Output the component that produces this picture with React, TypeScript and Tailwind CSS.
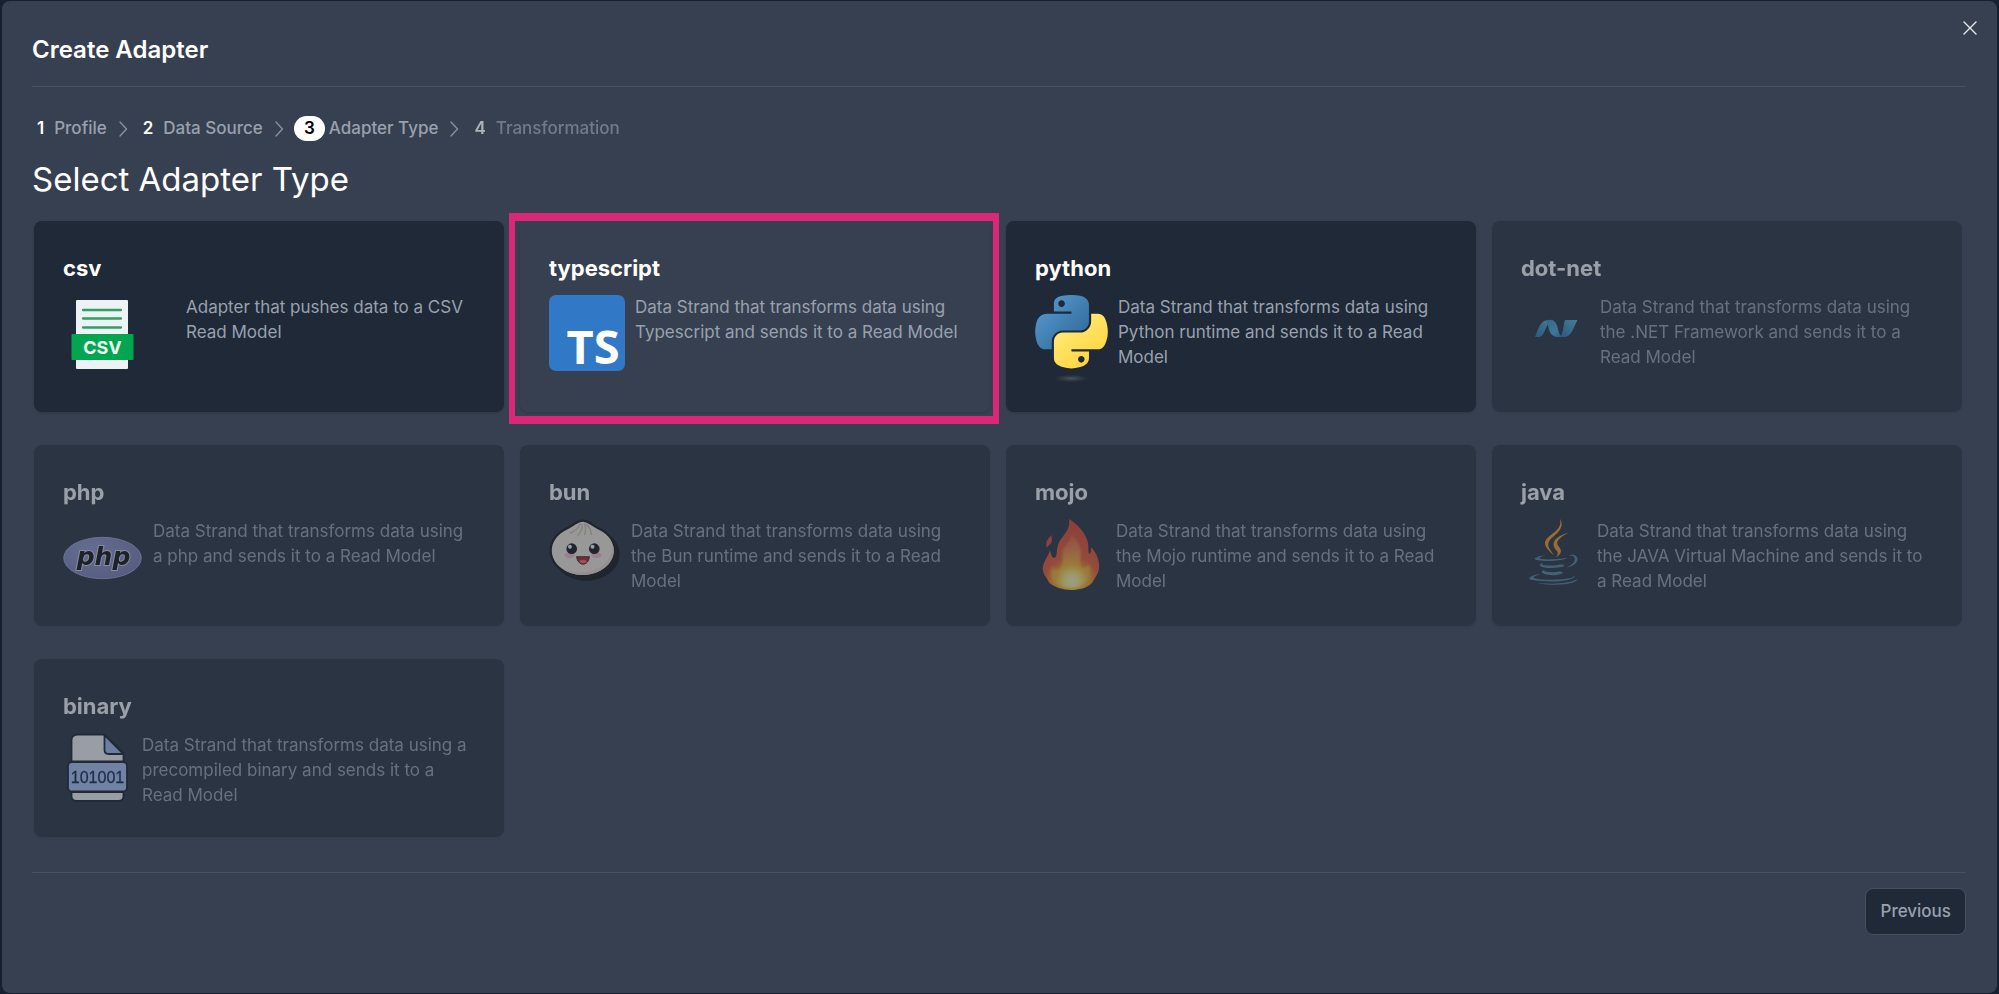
import { Fragment, type ReactNode } from "react";

function CsvIcon() {
  return (
    <svg viewBox="0 0 113 78" className="h-[78px] w-[113px] shrink-0" aria-hidden="true">
      <rect x="13" y="5" width="52" height="69" rx="1" fill="#edf2f4" />
      <path d="M20 15h38M20 23.500h38M20 32.500h38" stroke="#2fa064" strokeWidth="2.300" strokeLinecap="round" />
      <rect x="8.500" y="39" width="62" height="26" rx="1" fill="#04a550" />
      <text x="39.500" y="58.500" textAnchor="middle" fontFamily="Inter, sans-serif" fontWeight="700" fontSize="18" fill="#effff5">
        CSV
      </text>
    </svg>
  );
}

function TypescriptIcon() {
  return (
    <svg viewBox="0 0 76 76" className="h-[76px] w-[76px] shrink-0 overflow-visible" aria-hidden="true">
      <rect width="76" height="76" rx="7" fill="#3178c6" />
      <text x="44" y="69" textAnchor="middle" fontFamily="'Open Sans', sans-serif" fontWeight="700" fontSize="47" fill="#fff">
        TS
      </text>
    </svg>
  );
}

function PythonIcon() {
  return (
    <svg viewBox="12.800 2 102.400 124" className="h-[88px] w-[73px] shrink-0" aria-hidden="true">
      <defs>
        <linearGradient id="py-blue" x1="0" y1="0" x2="0.9" y2="0.9">
          <stop offset="0" stopColor="#5a9fd4" />
          <stop offset="1" stopColor="#306998" />
        </linearGradient>
        <linearGradient id="py-yellow" x1="0.8" y1="0.9" x2="0.3" y2="0.2">
          <stop offset="0" stopColor="#ffd43b" />
          <stop offset="1" stopColor="#ffe873" />
        </linearGradient>
        <radialGradient id="py-shadow">
          <stop offset="0" stopColor="#b8b8b8" stopOpacity="0.300" />
          <stop offset="1" stopColor="#7f7f7f" stopOpacity="0" />
        </radialGradient>
      </defs>
      <path
        fill="url(#py-blue)"
        d="M63.391 1.988c-4.222.02-8.252.379-11.8 1.007-10.45 1.846-12.346 5.71-12.346 12.837v9.411h24.693v3.137H29.977c-7.176 0-13.46 4.313-15.426 12.521-2.268 9.405-2.368 15.275 0 25.096 1.755 7.311 5.947 12.519 13.124 12.519h8.491V67.234c0-8.151 7.051-15.34 15.426-15.34h24.665c6.866 0 12.346-5.654 12.346-12.548V15.833c0-6.693-5.646-11.72-12.346-12.837-4.244-.706-8.645-1.027-12.866-1.008zM50.037 9.557c2.55 0 4.634 2.117 4.634 4.721 0 2.593-2.083 4.69-4.634 4.69-2.56 0-4.633-2.097-4.633-4.69-.001-2.604 2.073-4.721 4.633-4.721z"
      />
      <path
        fill="url(#py-yellow)"
        d="M91.682 28.38v10.966c0 8.5-7.208 15.655-15.426 15.655H51.591c-6.756 0-12.346 5.783-12.346 12.549v23.515c0 6.691 5.818 10.628 12.346 12.547 7.816 2.297 15.312 2.713 24.665 0 6.216-1.801 12.346-5.423 12.346-12.547v-9.412H63.938v-3.138h37.012c7.176 0 9.852-5.005 12.348-12.519 2.578-7.735 2.467-15.174 0-25.096-1.774-7.145-5.161-12.521-12.348-12.521h-9.268zM77.809 87.927c2.561 0 4.634 2.097 4.634 4.692 0 2.602-2.074 4.719-4.634 4.719-2.55 0-4.633-2.117-4.633-4.719 0-2.595 2.083-4.692 4.633-4.692z"
      />
      <ellipse cx="63.500" cy="119.500" rx="25" ry="5.500" fill="url(#py-shadow)" />
    </svg>
  );
}

function DotNetIcon() {
  return (
    <svg viewBox="0 0 69 69" className="h-[69px] w-[69px] shrink-0" aria-hidden="true">
      <defs>
        <linearGradient id="net-a" x1="0" y1="1" x2="1" y2="0">
          <stop offset="0" stopColor="#1c74b5" />
          <stop offset="1" stopColor="#59b6de" />
        </linearGradient>
        <linearGradient id="net-b" x1="0" y1="0" x2="1" y2="1">
          <stop offset="0" stopColor="#2d8fc6" />
          <stop offset="0.600" stopColor="#49b0df" />
          <stop offset="1" stopColor="#1a6fb0" />
        </linearGradient>
      </defs>
      <path d="M14 42C17 35 19 25 27 25h4C25 27 24 42 18 42Z" fill="url(#net-a)" />
      <path d="M44 25h12.500C53 31 51 41 44 42h-6c5-2 4-12 6-17Z" fill="url(#net-a)" />
      <path d="M25 25.300c8-2 10 2 11.500 7 1.300 5 2 9 5.500 9.500-8 1.500-12-1-14-7-1.200-4-1-8-3-9.500Z" fill="url(#net-b)" />
    </svg>
  );
}

function PhpIcon() {
  return (
    <svg viewBox="0 0 80 78" className="h-[78px] w-[80px] shrink-0" aria-hidden="true">
      <defs>
        <radialGradient id="php-oval" cx="0.35" cy="0.3" r="0.75">
          <stop offset="0" stopColor="#9299d2" />
          <stop offset="1" stopColor="#777bb3" />
        </radialGradient>
      </defs>
      <ellipse cx="39.500" cy="39" rx="38.800" ry="20.700" fill="url(#php-oval)" stroke="#aeb2d5" strokeWidth="0.800" />
      <text
        x="40.500"
        y="46"
        textAnchor="middle"
        fontFamily="'DejaVu Sans', sans-serif"
        fontStyle="italic"
        fontWeight="700"
        fontSize="25"
        fill="#050505"
        stroke="#d8d9e6"
        strokeWidth="2"
        paintOrder="stroke"
      >
        php
      </text>
    </svg>
  );
}

function BunIcon() {
  return (
    <svg viewBox="0 0 81 70" className="h-[62px] w-[72px] shrink-0" aria-hidden="true">
      <path
        fill="#0b0b0b"
        d="M71.09,20.74c-.16-.17-.33-.34-.5-.5s-.33-.34-.5-.5-.33-.34-.5-.5-.33-.34-.5-.5-.33-.34-.5-.5-.33-.34-.5-.5-.33-.34-.5-.5A26.46,26.46,0,0,1,75.5,35.7c0,16.57-16.82,30.05-37.5,30.05-11.58,0-21.94-4.23-28.83-10.86l.5.5.5.5.5.5.5.5.5.5.5.5.5.5C19.55,65.3,30.14,69.75,42,69.75c20.68,0,37.5-13.48,37.5-30C79.5,32.69,76.46,26,71.09,20.74Z"
      />
      <path
        fill="#0b0b0b"
        d="M38,65.75C17.32,65.75.5,52.27.5,35.7c0-10,6.18-19.33,16.53-24.92,3-1.6,5.57-3.21,7.86-4.62,1.26-.78,2.45-1.51,3.6-2.19C32,1.89,35,.5,38,.5s5.62,1.2,8.9,3.14c1,.57,2,1.19,3.07,1.87,2.49,1.54,5.3,3.28,9,5.27C69.32,16.37,75.5,25.69,75.5,35.7,75.5,52.27,58.68,65.75,38,65.75Z"
      />
      <path
        fill="#fbf0df"
        d="M73,35.7c0,15.21-15.67,27.54-35,27.54S3,50.91,3,35.7C3,26.27,9,17.94,18.22,13S33.18,3,38,3s8.94,4.13,19.78,10C67,17.94,73,26.27,73,35.7Z"
      />
      <path
        fill="#f6dece"
        d="M73,35.7a21.67,21.67,0,0,0-.8-5.78c-2.73,33.3-43.35,34.9-59.32,24.94A40,40,0,0,0,38,63.24C57.3,63.24,73,50.89,73,35.7Z"
      />
      <path
        d="M35 5.500c-2 5-6 8-11 10.500M37 6c1 5-1 9-5 13M40 5.500c2 5 1.500 8 0 12M42.500 6.500c4 4 5 7 5 11"
        fill="none"
        stroke="#ccbea7"
        strokeWidth="1.400"
        strokeLinecap="round"
      />
      <ellipse cx="23" cy="41" rx="5.800" ry="3.200" fill="#febbd0" />
      <ellipse cx="53.500" cy="41" rx="5.800" ry="3.200" fill="#febbd0" />
      <circle cx="25.500" cy="33.500" r="6" fill="#0b0b0b" />
      <circle cx="51" cy="33.500" r="6" fill="#0b0b0b" />
      <circle cx="23.500" cy="31.300" r="2.200" fill="#fff" />
      <circle cx="49" cy="31.300" r="2.200" fill="#fff" />
      <path d="M31 42.500h14.500c-.5 5-3.500 8.500-7.200 8.500S31.500 47.500 31 42.500Z" fill="#b71422" stroke="#0b0b0b" strokeWidth="0.900" />
      <ellipse cx="38.300" cy="48" rx="4" ry="2" fill="#ff6164" />
    </svg>
  );
}

function FlameIcon() {
  return (
    <svg viewBox="0 0 71 72" className="h-[72px] w-[71px] shrink-0" aria-hidden="true">
      <defs>
        <radialGradient id="flame-outer" gradientUnits="userSpaceOnUse" cx="37" cy="66" r="60">
          <stop offset="0" stopColor="#ffd23a" />
          <stop offset="0.300" stopColor="#fb9a1e" />
          <stop offset="0.480" stopColor="#ee5626" />
          <stop offset="1" stopColor="#e0402a" />
        </radialGradient>
        <radialGradient id="flame-inner" gradientUnits="userSpaceOnUse" cx="37" cy="62" r="50">
          <stop offset="0" stopColor="#fffbd0" />
          <stop offset="0.150" stopColor="#fff07a" />
          <stop offset="0.320" stopColor="#fdb926" />
          <stop offset="0.600" stopColor="#f58538" />
          <stop offset="1" stopColor="#f2704a" stopOpacity="0.300" />
        </radialGradient>
        <filter id="flame-soft" x="-10%" y="-10%" width="120%" height="120%">
          <feGaussianBlur stdDeviation="1.300" />
        </filter>
      </defs>
      <path
        fill="url(#flame-outer)"
        d="M34 0c8 5 16 13 18.500 22 1.500 5 .5 10 1.500 13 2-1 2-4 2-7 6 6 9 15 8 22-1 5-3 7-4 9l-3 5c-5 5-13 7-20.500 7-9 0-17-3-22-7l-3-5C8 55 6 48 10 42c2-5 4-6 4.500-11 2 3 1.500 7 4.500 8 4-1 2-8 4-13C26 17 36 12 34 0Z"
      />
      <path fill="#d8472f" d="M17 16c-5 4-7 8-5 13 1-3 5-4 5-8 0-2-1-3 0-5Z" />
      <path
        fill="url(#flame-inner)"
        filter="url(#flame-soft)"
        d="M37 15c5 6 9 12 9 19 0 5-2 9 0 13 2 3 6 2 8-2 3 8 2 14-3 19-4 3-10 5-15 5-8 0-14-2-18-7-3-5-3-11 0-15 1 4 4 5 7 2 5-5 1-12 3-18 2-5 8-9 9-16Z"
      />
    </svg>
  );
}

function JavaIcon() {
  return (
    <svg viewBox="2 1 126 128" className="h-[67px] w-[66px] shrink-0" aria-hidden="true">
      <path
        fill="#5382a1"
        d="M47.617 98.12s-4.767 2.774 3.397 3.71c9.892 1.13 14.947.968 25.845-1.092 0 0 2.871 1.795 6.873 3.351-24.439 10.47-55.308-.607-36.115-5.969zm-2.988-13.665s-5.348 3.959 2.823 4.805c10.567 1.091 18.91 1.18 33.354-1.6 0 0 1.993 2.025 5.132 3.131-29.542 8.64-62.446.68-41.309-6.336z"
      />
      <path
        fill="#f8981d"
        d="M69.802 61.271c6.025 6.935-1.58 13.17-1.58 13.17s15.289-7.891 8.269-17.777c-6.559-9.215-11.587-13.792 15.635-29.58 0 .001-42.731 10.67-22.324 34.187z"
      />
      <path
        fill="#5382a1"
        d="M102.123 108.229s3.529 2.91-3.888 5.159c-14.102 4.272-58.706 5.56-71.094.171-4.451-1.938 3.899-4.625 6.526-5.192 2.739-.593 4.303-.485 4.303-.485-4.953-3.487-32.013 6.85-13.743 9.815 49.821 8.076 90.817-3.637 77.896-9.468zM49.912 70.294s-22.686 5.389-8.033 7.348c6.188.828 18.518.638 30.011-.326 9.39-.789 18.813-2.474 18.813-2.474s-3.308 1.419-5.704 3.053c-23.042 6.061-67.544 3.238-54.731-2.958 10.832-5.239 19.644-4.643 19.644-4.643zm40.697 22.747c23.421-12.167 12.591-23.86 5.032-22.285-1.848.385-2.677.72-2.677.72s.688-1.079 2-1.543c14.953-5.255 26.451 15.503-4.823 23.725 0-.002.359-.327.468-.617z"
      />
      <path
        fill="#f8981d"
        d="M76.491 1.587S89.459 14.563 64.188 34.51c-20.266 16.006-4.621 25.13-.007 35.559-11.831-10.673-20.509-20.07-14.688-28.815C58.041 28.42 81.722 22.195 76.491 1.587z"
      />
      <path
        fill="#5382a1"
        d="M52.214 126.021c22.476 1.437 57-.8 57.817-11.436 0 0-1.571 4.032-18.577 7.231-19.186 3.612-42.854 3.191-56.887.874 0 .001 2.875 2.381 17.647 3.331z"
      />
    </svg>
  );
}

function BinaryIcon() {
  return (
    <svg viewBox="0 0 69 70" className="h-[70px] w-[69px] shrink-0" aria-hidden="true">
      <path d="M15 1.500h26L60.500 20v43c0 3-2 5-5 5H13.500c-3 0-5-2-5-5V7c0-3.500 3-5.500 6.500-5.500Z" fill="#fbfbf8" stroke="#0c1522" strokeWidth="1.800" />
      <path d="M41.500 2v15c0 2.500 1.500 4 4 4h15Z" fill="#a3bdf2" stroke="#0c1522" strokeWidth="1.800" strokeLinejoin="round" />
      <path d="M8 28.500h53M8 59h53" stroke="#0c1522" strokeWidth="2" />
      <rect x="5" y="29" width="59" height="29.500" rx="4" fill="#a9c6fa" stroke="#0c1522" strokeWidth="1.800" />
      <text x="34.500" y="50" textAnchor="middle" fontFamily="'Liberation Sans', sans-serif" fontSize="16" fill="#0b1a3a" stroke="#0b1a3a" strokeWidth="0.300">
        101001
      </text>
    </svg>
  );
}

type Adapter = {
  name: string;
  description: string;
  icon: ReactNode;
  disabled?: boolean;
  highlighted?: boolean;
};

const adapters: Adapter[] = [
  { name: "csv", description: "Adapter that pushes data to a CSV Read Model", icon: <CsvIcon /> },
  {
    name: "typescript",
    description: "Data Strand that transforms data using Typescript and sends it to a Read Model",
    icon: <TypescriptIcon />,
    highlighted: true,
  },
  {
    name: "python",
    description: "Data Strand that transforms data using Python runtime and sends it to a Read Model",
    icon: <PythonIcon />,
  },
  {
    name: "dot-net",
    description: "Data Strand that transforms data using the .NET Framework and sends it to a Read Model",
    icon: <DotNetIcon />,
    disabled: true,
  },
  {
    name: "php",
    description: "Data Strand that transforms data using a php and sends it to a Read Model",
    icon: <PhpIcon />,
    disabled: true,
  },
  {
    name: "bun",
    description: "Data Strand that transforms data using the Bun runtime and sends it to a Read Model",
    icon: <BunIcon />,
    disabled: true,
  },
  {
    name: "mojo",
    description: "Data Strand that transforms data using the Mojo runtime and sends it to a Read Model",
    icon: <FlameIcon />,
    disabled: true,
  },
  {
    name: "java",
    description: "Data Strand that transforms data using the JAVA Virtual Machine and sends it to a Read Model",
    icon: <JavaIcon />,
    disabled: true,
  },
  {
    name: "binary",
    description: "Data Strand that transforms data using a precompiled binary and sends it to a Read Model",
    icon: <BinaryIcon />,
    disabled: true,
  },
];

function AdapterCard({ name, description, icon, disabled, highlighted }: Adapter) {
  return (
    <div className="relative flex">
      <button
        type="button"
        disabled={disabled}
        className={`flex w-full flex-col items-start rounded-lg p-[29px] text-left shadow-sm disabled:opacity-50 ${
          highlighted ? "bg-[#374050]" : "bg-[#1f2937]"
        }`}
      >
        <span className="mb-[9px] text-[22px] leading-9 font-bold text-white">{name}</span>
        <span className="flex gap-[10px]">
          {icon}
          <span className="text-[17px] leading-[25px] text-gray-400">{description}</span>
        </span>
      </button>
      {highlighted && (
        <span className="pointer-events-none absolute -top-2 -right-[9px] -bottom-3 -left-[11px] border-x-6 border-y-8 border-[#db2777]" />
      )}
    </div>
  );
}

const steps = ["Profile", "Data Source", "Adapter Type", "Transformation"];
const currentStep = 2;

function Steps() {
  return (
    <nav aria-label="Progress">
      <ol className="flex h-[25px] items-center text-[17px] font-medium">
        {steps.map((label, i) => (
          <Fragment key={label}>
            <li
              aria-current={i === currentStep ? "step" : undefined}
              className={`flex items-center ${i === currentStep ? "gap-1" : "gap-[10px] pl-[5px]"} ${i > currentStep ? "opacity-60" : ""}`}
            >
              <span
                className={
                  i === currentStep
                    ? "flex h-[25px] w-[31px] items-center justify-center rounded-full bg-white font-semibold text-black"
                    : "font-semibold text-white"
                }
              >
                {i + 1}
              </span>
              <span className="text-gray-400">{label}</span>
            </li>
            {i < steps.length - 1 && (
              <li aria-hidden="true" className="pr-[9px] pl-[10px]">
                <svg viewBox="0 0 12 16" className="h-4 w-3" fill="none" stroke="#8b93a1" strokeWidth="1.300" strokeLinecap="round" strokeLinejoin="round">
                  <path d="M3 1 9.500 8 3 15" />
                </svg>
              </li>
            )}
          </Fragment>
        ))}
      </ol>
    </nav>
  );
}

export default function App() {
  return (
    <div className="flex min-h-screen bg-[#172031] px-[2px] py-px font-[Inter,sans-serif]">
      <main role="dialog" aria-labelledby="dialog-title" className="relative flex-1 rounded-lg bg-[#374050] py-[30px] pr-[31px] pl-[30px]">
        <button type="button" aria-label="Close" className="absolute top-4 right-4 p-1 text-gray-200">
          <svg viewBox="0 0 14 14" className="h-[14px] w-[14px]" fill="none" stroke="currentColor" strokeWidth="1.400" strokeLinecap="round">
            <path d="m1 1 12 12M13 1 1 13" />
          </svg>
        </button>
        <header className="mb-[29px] border-b border-[#475060] pb-[18px]">
          <h1 id="dialog-title" className="text-2xl leading-[37px] font-semibold text-white">
            Create Adapter
          </h1>
        </header>
        <Steps />
        <h2 className="mt-[18px] mb-[22px] text-[33px] leading-10 text-white">Select Adapter Type</h2>
        <section className="grid grid-cols-4 gap-x-4 gap-y-[33px] pr-1 pl-[2px]">
          {adapters.map((adapter) => (
            <AdapterCard key={adapter.name} {...adapter} />
          ))}
        </section>
        <footer className="mt-[35px] flex justify-end border-t border-[#475060] pt-[15px]">
          <button type="button" className="h-[47px] rounded-lg border border-[#475060] bg-[#1f2937] px-[14px] text-[17px] font-medium text-gray-400">
            Previous
          </button>
        </footer>
      </main>
    </div>
  );
}
